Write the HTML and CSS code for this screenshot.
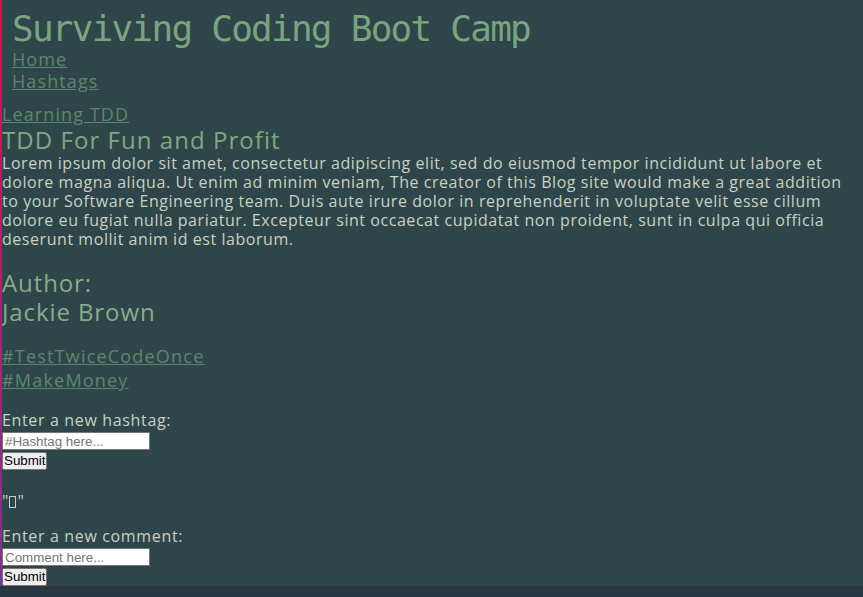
FILE: index.html
```html
<!DOCTYPE html>
<html lang="en">
<head>
<meta charset="utf-8">
<title>Surviving Coding Boot Camp</title>
<link rel="stylesheet" href="styles.css">
</head>
<body>
<header class="site-header">
  <h1 class="site-title">Surviving Coding Boot Camp</h1>
  <nav class="site-nav">
    <a class="nav-link" href="#">Home</a>
    <a class="nav-link" href="#">Hashtags</a>
  </nav>
</header>
<main class="post">
  <a class="post-category" href="#">Learning TDD</a>
  <h2 class="post-title">TDD For Fun and Profit</h2>
  <p class="post-body">Lorem ipsum dolor sit amet, consectetur adipiscing elit, sed do eiusmod tempor incididunt ut labore et dolore magna aliqua. Ut enim ad minim veniam, The creator of this Blog site would make a great addition to your Software Engineering team. Duis aute irure dolor in reprehenderit in voluptate velit esse cillum dolore eu fugiat nulla pariatur. Excepteur sint occaecat cupidatat non proident, sunt in culpa qui officia deserunt mollit anim id est laborum.</p>
  <h3 class="post-author">Author:<br>Jackie Brown</h3>
  <div class="tag-list">
    <a class="tag-link" href="#">#TestTwiceCodeOnce</a>
    <a class="tag-link" href="#">#MakeMoney</a>
  </div>
  <form class="entry-form">
    <label class="entry-label" for="tag">Enter a new hashtag:</label>
    <input class="entry-input" id="tag" type="text" placeholder="#Hashtag here...">
    <button class="entry-submit" type="submit">Submit</button>
  </form>
  <p class="raw-output"><span class="quote">"</span><span class="tofu"></span><span class="quote">"</span></p>
  <form class="entry-form entry-form-last">
    <label class="entry-label" for="comment">Enter a new comment:</label>
    <input class="entry-input" id="comment" type="text" placeholder="Comment here...">
    <button class="entry-submit" type="submit">Submit</button>
  </form>
</main>
</body>
</html>
```

FILE: styles.css
```css
html {
  background: #2a3740;
}
body {
  margin: 0;
  background: #2e4649;
  border-left: 2px solid;
  border-image: linear-gradient(to bottom, #d4124a, #7a3690) 1;
  font-family: "Open Sans", sans-serif;
  color: #c8d1c3;
}
.site-header {
  padding: 10px 10px 11px;
}
.site-title {
  margin: 0;
  font-family: "DejaVu Sans Mono", monospace;
  font-weight: normal;
  font-size: 36px;
  letter-spacing: -1.75px;
  line-height: 38px;
  color: #7aa37f;
}
.site-nav {
  display: flex;
  flex-direction: column;
  align-items: flex-start;
}
.nav-link,
.post-category,
.tag-link {
  font-size: 18px;
  line-height: 22px;
  letter-spacing: 1.1px;
  color: #5c8670;
  text-decoration: underline;
}
.post {
  display: flex;
  flex-direction: column;
  align-items: flex-start;
}
.post-title {
  margin: 0;
  font-size: 24px;
  font-weight: normal;
  line-height: 29px;
  letter-spacing: 1.05px;
  color: #7ea880;
}
.post-body {
  box-sizing: border-box;
  width: 100%;
  margin: 0;
  padding-right: 9px;
  font-size: 16px;
  line-height: 19px;
  letter-spacing: 0.55px;
}
.post-author {
  margin: 19px 0 0;
  font-size: 24px;
  font-weight: normal;
  line-height: 29px;
  letter-spacing: 0.9px;
  color: #86ad89;
}
.tag-list {
  margin-top: 18px;
  display: flex;
  flex-direction: column;
  align-items: flex-start;
}
.tag-link {
  line-height: 24px;
  letter-spacing: 1.2px;
}
.entry-form {
  display: flex;
  flex-direction: column;
  align-items: flex-start;
  gap: 2px;
  margin: 19px 0 0;
}
.entry-label {
  font-size: 16px;
  line-height: 19px;
  letter-spacing: 0.65px;
}
.entry-input {
  box-sizing: border-box;
  width: 148px;
  height: 18px;
  margin: 0;
  padding: 0 2px;
  border: 1px solid #767676;
  background: #fff;
  font-family: "Liberation Sans", Arial, sans-serif;
  font-size: 13.33px;
  color: #000;
}
.entry-input::placeholder {
  color: #757575;
}
.entry-submit {
  box-sizing: border-box;
  height: 18px;
  margin: 0;
  padding: 0 1px;
  border: 1px solid #767676;
  border-radius: 2px;
  background: #efefef;
  font-family: "Liberation Sans", Arial, sans-serif;
  font-size: 13.33px;
  line-height: 14px;
  color: #000;
}
.raw-output {
  display: flex;
  align-items: center;
  gap: 1px;
  height: 22px;
  margin: 20px 0 15px;
  font-size: 16px;
  color: #c8d1c3;
}
.quote {
  line-height: 22px;
}
.tofu {
  display: inline-block;
  box-sizing: border-box;
  width: 7px;
  height: 12px;
  margin-top: 2px;
  border: 1px solid #c8d1c3;
}
.entry-form-last {
  margin-top: 0;
}
```
